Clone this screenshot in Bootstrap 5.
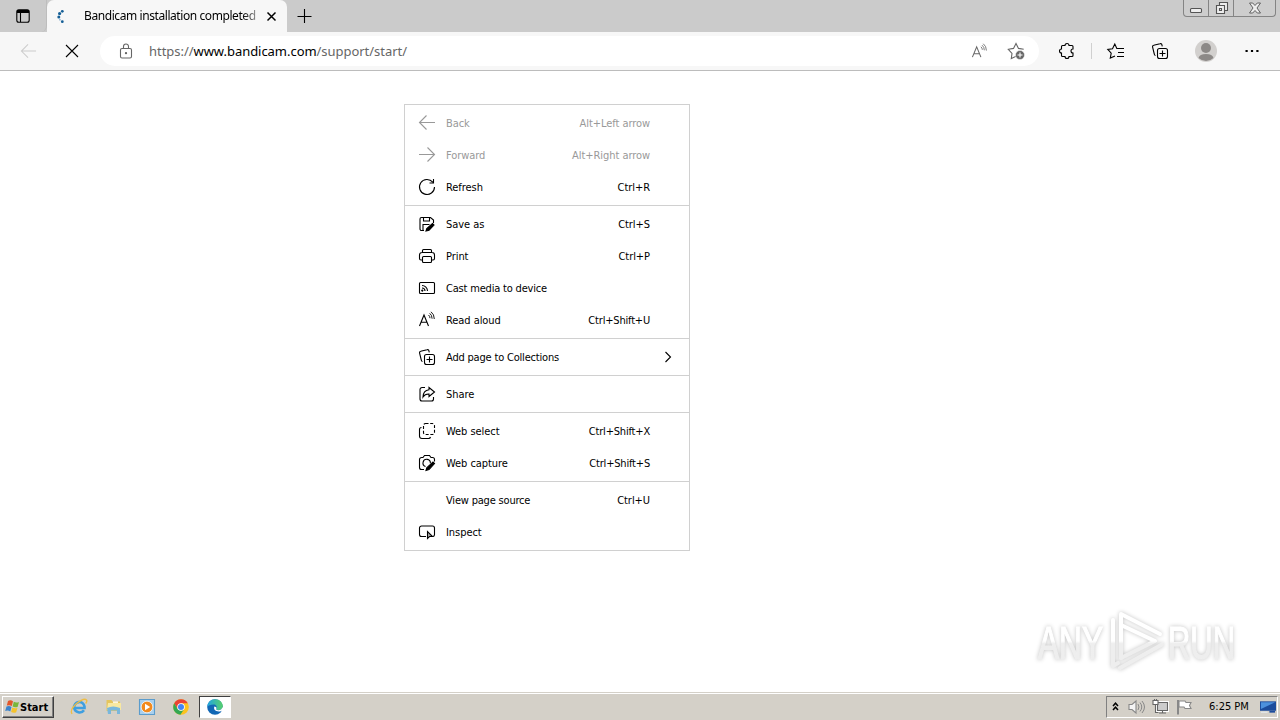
<!DOCTYPE html>
<html lang="en">
<head>
  <meta charset="UTF-8">
  <meta name="viewport" content="width=device-width, initial-scale=1.0">
  <title>Bandicam installation completed</title>
  <link href="https://cdn.jsdelivr.net/npm/bootstrap@5.3.0/dist/css/bootstrap.min.css" rel="stylesheet">
  <style>
    body {
      width: 1280px;
      height: 720px;
      overflow: hidden;
      background: #fff;
      color: #000;
      font-family: "DejaVu Sans Condensed", "DejaVu Sans", sans-serif;
      font-size: 11px;
    }
    svg {
      display: block;
      flex: none;
      fill: none;
      stroke: currentColor;
      stroke-width: 1.1;
      overflow: visible;
    }
    .ui-font { font-family: "Noto Sans", "Open Sans", sans-serif; }
    .tab-strip { height: 32px; background: #cbcbcb; }
    .strip-btn { width: 47px; height: 32px; border-radius: 0 0 6px 0; border-right: 1px solid #bdbdbd; }
    .page-tab {
      width: 240px;
      height: 32px;
      padding: 0 11px 0 8px;
      background: #f7f7f7;
      border-radius: 7px 7px 0 0;
    }
    .tab-title {
      width: 176px;
      margin-left: 15px;
      white-space: nowrap;
      font-size: 12px;
      letter-spacing: -.42px;
      -webkit-mask-image: linear-gradient(90deg, #000 158px, rgba(0,0,0,.25) 176px);
      mask-image: linear-gradient(90deg, #000 158px, rgba(0,0,0,.25) 176px);
    }
    .window-btns {
      width: 93px;
      height: 17px;
      margin-right: 4px;
      border: 1px solid #848484;
      border-top: 0;
      border-radius: 0 0 4px 4px;
      color: #555;
      background: #cdcdcd;
    }
    .window-btns > div + div { border-left: 1px solid #848484; }
    .toolbar-row { height: 39px; background: #f7f7f7; border-bottom: 1px solid #bcbcbc; padding-left: 6px; }
    .tool-cell { width: 44px; height: 37px; }
    .address-bar { width: 939px; height: 30px; margin: 0 6px; padding: 0 14px 0 18px; background: #fff; border-radius: 15px; color: #666; }
    .url-text { font-size: 13px; letter-spacing: -.04px; margin: 2px 0 0 15px; white-space: nowrap; }
    .tool-sep { width: 1px; height: 16px; margin: 0 2px; background: #d0d0d0; }

    .page-area { height: 621px; padding: 33px 0 0 404px; }
    .context-menu { width: 286px; border: 1px solid #d0d0d0; background: #fff; }
    .menu-group { padding: 2px 0; }
    .menu-group + .menu-group { border-top: 1px solid #d0d0d0; }
    .menu-row { height: 32px; padding: 0 39px 0 13px; white-space: nowrap; }
    .menu-row span { padding-top: 2px; letter-spacing: -.06px; }
    .menu-row .tight { letter-spacing: -.19px; }
    .menu-row svg { width: 18px; height: 18px; margin-right: 10px; }
    .menu-row .submenu-arrow { width: 6px; height: 10px; margin: 0 -21px 0 0; }
    .menu-off { color: #999; }

    .watermark { right: 46px; top: 608px; }
    .watermark svg { filter: drop-shadow(0 0 2px rgba(0,0,0,.24)); }
    .watermark text { font: 47px "Liberation Sans", sans-serif; stroke: url(#wm); stroke-width: 1.2px; }

    .taskbar { height: 28px; background: #d4d0c8; border-top: 1px solid #d4d0c8; box-shadow: inset 0 1px #fff; padding: 0 2px; }
    .start-btn {
      width: 52px;
      height: 22px;
      padding: 0 2px;
      font: bold 11px "DejaVu Sans Condensed", sans-serif;
      background: #d4d0c8;
      border: 1px solid;
      border-color: #fff #404040 #404040 #fff;
      box-shadow: inset -1px -1px #808080;
    }
    .task-icon { width: 34px; }
    .task-active { width: 32px; height: 22px; margin-left: 1px; background: #fff; border: 1px solid; border-color: #404040 #fff #fff #404040; }
    .tray { width: 172px; height: 22px; border: 1px solid; border-color: #808080 #fff #fff #808080; }
  </style>
</head>
<body>
  <svg width="0" height="0" class="position-absolute">
    <symbol id="i-back" viewBox="0 0 18 18"><path d="M17 8.500H1.500M8.500 1.500l-7 7 7 7"/></symbol>
    <symbol id="i-forward" viewBox="0 0 18 18"><path d="M1 8.500h15.500M9.500 1.500l7 7-7 7"/></symbol>
    <symbol id="i-refresh" viewBox="0 0 18 18"><path d="M14.800 4.200A7.500 7.500 0 1 0 16.500 9M15.500 1v4H11.500"/></symbol>
    <symbol id="i-save" viewBox="0 0 18 18">
      <path d="M6 15.500H3.500a1.500 1.500 0 0 1-1.500-1.500V4a1.500 1.500 0 0 1 1.500-1.500H12.500L15.500 5v3M5.500 2.500V6h6V2.500M5 15V9.500h6.500"/>
      <path d="M8 16l.8-2.500 5.700-5 1.500 1.500-5 5.200z" fill="currentColor"/>
    </symbol>
    <symbol id="i-print" viewBox="0 0 18 18">
      <path d="M4.500 5.500v-2a1 1 0 0 1 1-1h7a1 1 0 0 1 1 1v2M4.500 13H3a1.500 1.500 0 0 1-1.500-1.500V8A2.500 2.500 0 0 1 4 5.500h10A2.500 2.500 0 0 1 16.500 8v3.500A1.500 1.500 0 0 1 15 13h-1.500"/>
      <rect x="4.500" y="9.500" width="9" height="6" rx="1"/>
    </symbol>
    <symbol id="i-cast" viewBox="0 0 18 18">
      <rect x="1.500" y="3.500" width="15" height="11" rx="1"/>
      <path d="M4 6.500a5.500 5.500 0 0 1 5.500 5.500M4 9a3 3 0 0 1 3 3"/><circle cx="4.300" cy="11.600" r=".6" fill="currentColor"/>
    </symbol>
    <symbol id="i-aloud" viewBox="0 0 18 18">
      <path d="M1.500 15 6 4l4.500 11M3 11.300h6"/>
      <path stroke-width=".9" d="M10.500 4q1.500 1.200 1.500 3.200M11.700 2.300q2.400 1.900 2.400 5.400M13 .8q3.300 2.500 3.300 7.200"/>
    </symbol>
    <symbol id="i-collect" viewBox="0 0 18 18">
      <path d="M4.500 13.500A1.500 1.500 0 0 1 3.300 12L1.600 5.200A1.500 1.500 0 0 1 2.700 3.300L9 1.700a1.500 1.500 0 0 1 1.900 1.100l.4 1.500"/>
      <rect x="6.500" y="6.500" width="10" height="10" rx="2"/><path d="M11.500 8.500v6M8.500 11.500h6"/>
    </symbol>
    <symbol id="i-share" viewBox="0 0 18 18">
      <path d="M7 2.500H4A2 2 0 0 0 2 4.500v9.500a2 2 0 0 0 2 2h9.500a2 2 0 0 0 2-2v-2"/>
      <path d="M11 2.500 16.500 7 11 11.500V9Q7 8.800 5 12q.2-6.500 6-7.200z"/>
    </symbol>
    <symbol id="i-select" viewBox="0 0 18 18">
      <rect x="5.500" y="1.500" width="11" height="11" rx="2" stroke-dasharray="3 1.700"/>
      <path d="M3.500 5.500A2 2 0 0 0 1.500 7.500V14a2.500 2.500 0 0 0 2.500 2.500h6.500a2 2 0 0 0 2-1.500"/>
    </symbol>
    <symbol id="i-capture" viewBox="0 0 18 18">
      <path d="M6 15.500H3.500a2 2 0 0 1-2-2V5.500a2 2 0 0 1 2-2H5l1.500-2h5l1.500 2h1.500a2 2 0 0 1 2 2V7.500M7.500 12.500a3.700 3.700 0 1 1 4.900-3.300"/>
      <path d="M8 16.500l.8-2.800 6.200-5.700 1.500 1.500-5.500 6z" fill="currentColor"/>
    </symbol>
    <symbol id="i-inspect" viewBox="0 0 18 18">
      <path d="M8 13.500H3.500a2 2 0 0 1-2-2V5a2 2 0 0 1 2-2h11a2 2 0 0 1 2 2v6.500a2 2 0 0 1-1.500 2"/>
      <path d="M9.500 8.500v7l2-2h3z" fill="#aaa"/>
    </symbol>
    <symbol id="i-star" viewBox="0 0 18 18"><path d="M10 15 9 14.300 4.300 16.500 5 11.400 1.300 7.300 6.500 6.400 9 1.500l2.500 4.900 5.200.9"/></symbol>
  </svg>

  <!-- Tab strip -->
  <div class="tab-strip d-flex ui-font">
    <div class="strip-btn d-flex align-items-center justify-content-center">
      <svg width="14" height="14" viewBox="0 0 14 14"><rect x=".8" y=".8" width="12.400" height="12.400" rx="2"/><path d="M1 2.500h12" stroke-width="3"/><path d="M4.500 3v10"/></svg>
    </div>
    <div class="page-tab d-flex align-items-center">
      <svg width="14" height="14" viewBox="0 0 14 14" style="stroke:none"><g fill="#155f96"><circle cx="7.300" cy="2.300" r="1.400"/><circle cx="4.600" cy="4.600" r="1.600"/><circle cx="3.800" cy="8" r="1.500"/><circle cx="7.300" cy="12.700" r="1.400"/></g><circle cx="4.900" cy="10.700" r=".9" fill="#8fb5d3"/></svg>
      <div class="tab-title">Bandicam installation completed</div>
      <svg class="ms-auto" width="9" height="9" viewBox="0 0 9 9" style="stroke-width:1.500"><path d="M.5.5l8 8M8.500.5l-8 8"/></svg>
    </div>
    <svg class="align-self-center" style="margin-left:10px" width="14" height="14" viewBox="0 0 14 14"><path d="M7.500 0v14M.5 7.500h14"/></svg>
    <div class="window-btns d-flex ms-auto">
      <div class="d-flex justify-content-center" style="width:24px"><svg width="12" height="16" viewBox="0 0 12 16"><rect x=".5" y="8.500" width="11" height="4" rx="1" fill="#eee"/></svg></div>
      <div class="d-flex justify-content-center" style="width:25px"><svg width="13" height="16" viewBox="0 0 13 16"><path fill="#eee" d="M4.500 2.500h8v8h-8z"/><path fill="#eee" d="M1.500 5.500h8v8h-8z"/><path d="M4.500 8.500h2v2h-2z"/></svg></div>
      <div class="d-flex justify-content-center flex-fill"><svg width="12" height="16" viewBox="0 0 12 16"><path fill="#eee" stroke-width=".9" d="M.5 3h3.200L6 5.500 8.300 3h3.200L8 8l3.500 5H8.300L6 10.500 3.700 13H.5L4 8z"/></svg></div>
    </div>
  </div>

  <!-- Address row -->
  <div class="toolbar-row d-flex align-items-center">
    <div class="tool-cell d-flex align-items-center justify-content-center" style="color:#ccc"><svg width="17" height="17"><use href="#i-back"/></svg></div>
    <div class="tool-cell d-flex align-items-center justify-content-center"><svg width="12" height="12" viewBox="0 0 12 12"><path d="M0 0l12 12M12 0 0 12"/></svg></div>
    <div class="address-bar d-flex align-items-center">
      <svg width="16" height="16" viewBox="0 0 16 16"><rect x="2.500" y="5.500" width="11" height="9.500" rx="1.500"/><path d="M5.500 5.500V3.500a2.500 2.500 0 0 1 5 0v2"/><circle cx="8" cy="10.200" r=".6" fill="currentColor"/></svg>
      <div class="url-text ui-font">https://<span class="text-black">www.bandicam.com</span>/support/start/</div>
      <svg class="ms-auto" width="17" height="17"><use href="#i-aloud"/></svg>
      <svg width="18" height="18" viewBox="0 0 18 18" style="margin-left:19px"><use href="#i-star"/><circle cx="13" cy="13" r="4.500" fill="#666" stroke="#fff" stroke-width=".5"/><path d="M13 10.500v5M10.500 13h5" stroke="#fff"/></svg>
    </div>
    <div class="tool-cell d-flex align-items-center justify-content-center">
      <svg width="16" height="16" viewBox="0 0 16 16"><path d="M3.500 2.500H6a2 2 0 0 1 4 0h3a1 1 0 0 1 1 1V6a2 2 0 0 0 0 4v2.500a1 1 0 0 1-1 1H10a2 2 0 0 1-4 0H3.500a1 1 0 0 1-1-1V10a2 2 0 0 1 0-4V3.500a1 1 0 0 1 1-1z"/></svg>
    </div>
    <div class="tool-sep"></div>
    <div class="tool-cell d-flex align-items-center justify-content-center">
      <svg width="18" height="18" viewBox="0 0 18 18"><path d="M8 14 3.300 16l.9-4.900L.8 7.500l4.700-.7L7.800 2l2 4.500H17M11 10.500h6M10 14.500h7"/></svg>
    </div>
    <div class="tool-cell d-flex align-items-center justify-content-center"><svg width="18" height="18"><use href="#i-collect"/></svg></div>
    <div class="tool-cell d-flex align-items-center justify-content-center" style="margin:0 2px">
      <svg width="22" height="22" viewBox="0 0 22 22" style="stroke:none"><circle cx="11" cy="11" r="11" fill="#d2d0ce"/><circle cx="11" cy="8" r="5" fill="#8c8987"/><path d="M3.500 18q1-4 7.500-4t7.500 4A11 11 0 0 1 3.500 18z" fill="#8c8987"/></svg>
    </div>
    <div class="tool-cell d-flex align-items-center justify-content-center"><svg width="14" height="4" viewBox="0 0 14 4" style="stroke:none"><path fill="#000" d="M.5 1h2.200v2H.5zM5.900 1h2.200v2H5.900zM11.300 1h2.200v2h-2.200z"/></svg></div>
  </div>

  <!-- Page with context menu -->
  <main class="page-area">
    <div class="context-menu">
      <div class="menu-group">
        <div class="menu-row menu-off d-flex align-items-center"><svg><use href="#i-back"/></svg><span>Back</span><span class="ms-auto">Alt+Left arrow</span></div>
        <div class="menu-row menu-off d-flex align-items-center"><svg><use href="#i-forward"/></svg><span>Forward</span><span class="ms-auto">Alt+Right arrow</span></div>
        <div class="menu-row d-flex align-items-center"><svg><use href="#i-refresh"/></svg><span>Refresh</span><span class="ms-auto">Ctrl+R</span></div>
      </div>
      <div class="menu-group">
        <div class="menu-row d-flex align-items-center"><svg><use href="#i-save"/></svg><span>Save as</span><span class="ms-auto">Ctrl+S</span></div>
        <div class="menu-row d-flex align-items-center"><svg><use href="#i-print"/></svg><span>Print</span><span class="ms-auto">Ctrl+P</span></div>
        <div class="menu-row d-flex align-items-center"><svg><use href="#i-cast"/></svg><span class="tight">Cast media to device</span></div>
        <div class="menu-row d-flex align-items-center"><svg><use href="#i-aloud"/></svg><span>Read aloud</span><span class="ms-auto tight">Ctrl+Shift+U</span></div>
      </div>
      <div class="menu-group">
        <div class="menu-row d-flex align-items-center"><svg><use href="#i-collect"/></svg><span class="tight">Add page to Collections</span><svg class="submenu-arrow ms-auto" viewBox="0 0 6 10"><path d="M.5 0l5 5-5 5"/></svg></div>
      </div>
      <div class="menu-group">
        <div class="menu-row d-flex align-items-center"><svg><use href="#i-share"/></svg><span>Share</span></div>
      </div>
      <div class="menu-group">
        <div class="menu-row d-flex align-items-center"><svg><use href="#i-select"/></svg><span>Web select</span><span class="ms-auto tight">Ctrl+Shift+X</span></div>
        <div class="menu-row d-flex align-items-center"><svg><use href="#i-capture"/></svg><span>Web capture</span><span class="ms-auto tight">Ctrl+Shift+S</span></div>
      </div>
      <div class="menu-group">
        <div class="menu-row d-flex align-items-center"><svg></svg><span class="tight">View page source</span><span class="ms-auto">Ctrl+U</span></div>
        <div class="menu-row d-flex align-items-center"><svg><use href="#i-inspect"/></svg><span>Inspect</span></div>
      </div>
    </div>
  </main>

  <div class="watermark position-absolute">
    <svg width="196" height="66" viewBox="0 0 196 66">
      <defs>
        <linearGradient id="wm" x1="0" y1="0" x2="0" y2="66" gradientUnits="userSpaceOnUse"><stop offset=".5" stop-color="#fff"/><stop offset=".54" stop-color="#eee"/></linearGradient>
      </defs>
      <text x="0" y="51" textLength="65" lengthAdjust="spacingAndGlyphs" fill="url(#wm)">ANY</text>
      <text x="130" y="51" textLength="67" lengthAdjust="spacingAndGlyphs" fill="url(#wm)">RUN</text>
      <g stroke="url(#wm)" stroke-linejoin="round" stroke-linecap="round" style="stroke-width:4">
        <path d="M83 50V6l39 20"/><path d="M75 12v46l5-3"/><path d="M83 17v33l34-17z"/><path d="M82 60l42-23.500"/>
      </g>
    </svg>
  </div>

  <!-- Taskbar -->
  <footer class="taskbar d-flex align-items-center">
    <div class="start-btn d-flex align-items-center">
      <svg width="15" height="15" viewBox="0 0 15 15" style="stroke:none"><path fill="#e2572b" d="M3 2q2.500-1.500 5 .3L6.800 7Q4.500 5.500 1.800 6.600z"/><path fill="#79b63b" d="M8.800 2.800q2.500 1.500 5.200.2l-1.300 4.700q-2.600 1.200-5.100-.3z"/><path fill="#3a83cc" d="M1.500 7.600q2.600-1.200 5 .4l-1.200 4.500Q3 11 .2 12z"/><path fill="#f5c32c" d="M7.300 8.400q2.600 1.500 5.200.3l-1.300 4.500q-2.600 1.200-5.100-.3z"/></svg>
      <span style="padding-top:1px">Start</span>
    </div>
    <div class="task-icon d-flex justify-content-center" style="margin-left:8px">
      <svg width="18" height="18" viewBox="0 0 18 18"><path d="M14.500 10H4.200a5.200 5.200 0 1 1 10.300-1.500zM14 12.200A5.500 5.500 0 0 1 4.200 10" stroke="#3f9fe0" style="stroke-width:2.600"/><path d="M2 16Q-.5 12 6 6q8-6.500 10.500-4 1 1-.8 3.500" stroke="#eebd45" style="stroke-width:1.400"/></svg>
    </div>
    <div class="task-icon d-flex justify-content-center">
      <svg width="17" height="17" viewBox="0 0 17 17" style="stroke:none"><path fill="#e5c55d" d="M1.500 2h5l1 1.500H15V13H1.500z"/><path fill="#f8e8a0" d="M3 5h13v7H2z"/><path fill="#79b7dc" d="M2 10q6-3 13 0v6h-3v-3.500H6V16H3z"/><path fill="#fff" d="M8 3.500h5v1.300H8z"/></svg>
    </div>
    <div class="task-icon d-flex justify-content-center">
      <svg width="16" height="16" viewBox="0 0 16 16"><path fill="#a9d0ee" stroke="#5b9ccc" d="M.5.5h15v15H.5z"/><circle cx="8" cy="8" r="5.800" fill="#f28a1d" stroke="#fff" style="stroke-width:.7"/><path fill="#fff" stroke="none" d="M6 4.800 11.200 8 6 11.200z"/></svg>
    </div>
    <div class="task-icon d-flex justify-content-center">
      <svg width="16" height="16" viewBox="0 0 16 16" style="stroke:none"><circle cx="8" cy="8" r="7.800" fill="#fcc31e"/><path fill="#ea4335" d="M1.200 4.200A7.800 7.800 0 0 1 14.800 4.200H8L4.700 9.900z"/><path fill="#34a853" d="M1.200 4.200 4.700 9.900 8 11.800 11.200 10l-3.800 5.800A7.800 7.800 0 0 1 1.200 4.200z"/><circle cx="8" cy="8" r="3.800" fill="#fff"/><circle cx="8" cy="8" r="3" fill="#4285f4"/></svg>
    </div>
    <div class="task-active d-flex align-items-center justify-content-center">
      <svg width="16" height="16" viewBox="0 0 16 16" style="stroke:none"><defs><linearGradient id="edg"><stop stop-color="#21a5e2"/><stop offset="1" stop-color="#57d06a"/></linearGradient></defs><circle cx="8" cy="8" r="7.800" fill="#1267b5"/><path fill="url(#edg)" d="M.3 7.500C.8 3 4 .2 8 .2c5 0 7.800 3.600 7.800 6.800 0 3-2.400 4-4.300 4-2 0-2.500-.8-2-1.600C10.300 7.500 9 5.500 6.500 5.500 3.500 5.500 1 7 .3 7.500z"/><path fill="#fff" d="M7.300 7.500q-1 3 2 4.600 2.700 1 5-.2 1-.3.500.7l1.200-.6V8l-2 2.600q-3 1.200-4.700 0-.5-.5.300-1.500-.3-1.500-2.300-1.600z"/></svg>
    </div>
    <div class="tray d-flex align-items-center ms-auto">
      <svg width="7" height="9" viewBox="0 0 7 9" style="margin-left:5px;stroke-width:1.500"><path d="M1 4l2.500-2.800L6 4M1 8l2.500-2.800L6 8"/></svg>
      <svg width="17" height="16" viewBox="0 0 17 16" style="margin-left:9px;color:#888"><path fill="#f4f4f4" d="M1 5.500h3L8 2v12l-4-3.500H1z"/><path stroke-width="1" d="M10 5q2 3 0 6M12 3.500q3.500 4.500 0 9M14 2q5 6 0 12"/></svg>
      <svg width="17" height="16" viewBox="0 0 17 16" style="margin-left:7px;color:#666"><path fill="#ccc" stroke="#fff" d="M5.500 3.500h10v8h-10z" style="stroke-width:3"/><path fill="#ccc" d="M5.500 3.500h10v8h-10z"/><path fill="#fff" d="M1 1.500h5v4H1z"/><path d="M3.500 5.500v8h3M7 14h7M10.500 11.500V14M2.500 0v2M4.500 0v2"/></svg>
      <svg width="16" height="16" viewBox="0 0 16 16" style="margin-left:7px;color:#888"><path d="M2 1v14.500" style="stroke-width:2"/><path fill="#fff" d="M3 2h6l1 1.500h5L13.500 6.500 15 9.500H9L8 8H3z"/></svg>
      <span style="margin-left:17px;padding-top:2px;white-space:nowrap">6:25 PM</span>
      <svg class="ms-auto" width="16" height="14" viewBox="0 0 17 14" style="margin-right:1px;stroke:none"><path fill="#1c4c9c" d="M0 1h17v10H0z"/><path fill="#4d91dd" d="M1 2h15L1 9z"/><path fill="#e8f0f8" d="M1 12h7v1H1z"/><path fill="#1c4c9c" d="M10 11h6v2h-6z"/></svg>
    </div>
  </footer>
</body>
</html>
